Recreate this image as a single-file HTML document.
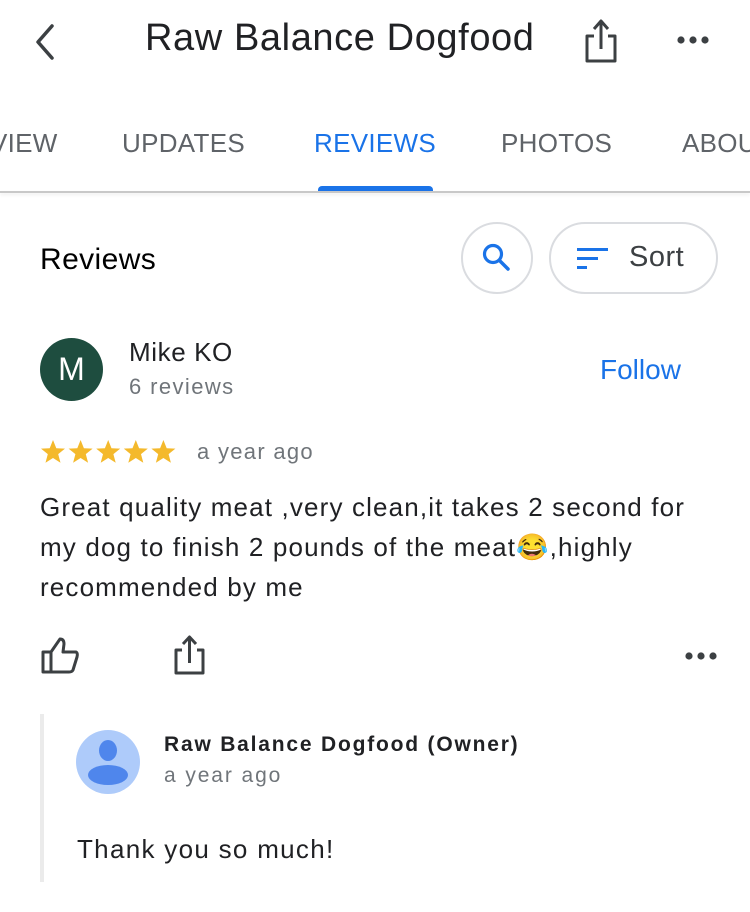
<!DOCTYPE html>
<html><head><meta charset="utf-8"><style>
*{margin:0;padding:0;box-sizing:border-box}
body{width:750px;height:912px;background:#fff;position:relative;overflow:hidden;font-family:"Liberation Sans",sans-serif;color:#202124}
.a{position:absolute;white-space:nowrap}
.tab{position:absolute;top:128px;font-size:26px;color:#5f6368;letter-spacing:0.3px}
</style></head><body>
<svg class="a" style="left:28px;top:22px" width="32" height="40" viewBox="0 0 32 40"><path d="M24 4 L10 20 L24 36" fill="none" stroke="#3c4043" stroke-width="3.5" stroke-linecap="round" stroke-linejoin="round"/></svg>
<div class="a" style="left:145px;top:17px;font-size:38px;letter-spacing:0.6px;color:#202124">Raw Balance Dogfood</div>
<svg class="a" style="left:582px;top:18px" width="38" height="46" viewBox="0 0 38 46"><path d="M12 18 H5 V43 H33 V18 H26" fill="none" stroke="#3c4043" stroke-width="3" stroke-linejoin="round"/><path d="M19 31 V4 M12 11 L19 3 L26 11" fill="none" stroke="#3c4043" stroke-width="3" stroke-linejoin="round"/></svg>
<svg class="a" style="left:676px;top:34px" width="36" height="12"><circle cx="5" cy="6" r="3.6" fill="#3c4043"/><circle cx="17" cy="6" r="3.6" fill="#3c4043"/><circle cx="29" cy="6" r="3.6" fill="#3c4043"/></svg>
<div class="tab" style="left:-10px">VIEW</div>
<div class="tab" style="left:122px">UPDATES</div>
<div class="tab" style="left:314px;color:#1a73e8">REVIEWS</div>
<div class="tab" style="left:501px">PHOTOS</div>
<div class="tab" style="left:682px">ABOUT</div>
<div class="a" style="left:318px;top:186px;width:115px;height:6px;background:#1a73e8;border-radius:4px 4px 0 0"></div>
<div class="a" style="left:0;top:191px;width:750px;height:2px;background:#c8c8c8;box-shadow:0 2px 3px rgba(0,0,0,0.08)"></div>
<div class="a" style="left:40px;top:243px;font-size:30px;letter-spacing:0.4px;color:#000">Reviews</div>
<div class="a" style="left:461px;top:222px;width:72px;height:72px;border:2px solid #dadce0;border-radius:50%"></div>
<svg class="a" style="left:480px;top:241px" width="34" height="34" viewBox="0 0 34 34"><circle cx="13" cy="13" r="8.5" fill="none" stroke="#1a73e8" stroke-width="3.2"/><path d="M19.5 19.5 L28 28" stroke="#1a73e8" stroke-width="3.5" stroke-linecap="round"/></svg>
<div class="a" style="left:549px;top:222px;width:169px;height:72px;border:2px solid #dadce0;border-radius:36px"></div>
<svg class="a" style="left:576px;top:246px" width="34" height="24"><rect x="1" y="2" width="31" height="3" fill="#1a73e8"/><rect x="1" y="11" width="21" height="3" fill="#1a73e8"/><rect x="1" y="20" width="10" height="3" fill="#1a73e8"/></svg>
<div class="a" style="left:629px;top:241px;font-size:29px;letter-spacing:0.5px;color:#3c4043">Sort</div>
<div class="a" style="left:40px;top:338px;width:63px;height:63px;border-radius:50%;background:#1e4d3f;color:#fff;font-size:32px;text-align:center;line-height:63px">M</div>
<div class="a" style="left:129px;top:337px;font-size:26px;letter-spacing:0.6px;color:#202124">Mike KO</div>
<div class="a" style="left:129px;top:374px;font-size:22px;color:#70757a;letter-spacing:1.4px">6 reviews</div>
<div class="a" style="left:600px;top:354px;font-size:28px;color:#1a73e8">Follow</div>
<svg class="a" style="left:40px;top:439px" width="140" height="26" viewBox="0 0 140 26">
<g fill="#f4b92c">
<path id="s" d="M13 1 L16.3 9.2 L25 9.6 L18.2 15.1 L20.5 23.8 L13 19 L5.5 23.8 L7.8 15.1 L1 9.6 L9.7 9.2 Z"/>
<use href="#s" x="27.6"/><use href="#s" x="55.2"/><use href="#s" x="82.8"/><use href="#s" x="110.4"/>
</g></svg>
<div class="a" style="left:197px;top:439px;font-size:22px;color:#70757a;letter-spacing:1.3px">a year ago</div>
<div class="a" style="left:40px;top:487px;font-size:26px;letter-spacing:1.15px;line-height:40px;color:#202124;white-space:nowrap">Great quality meat ,very clean,it takes 2 second for<br>my dog to finish 2 pounds of the meat😂,highly<br>recommended by me</div>
<svg class="a" style="left:40px;top:636px" width="42" height="40" viewBox="0 0 42 40"><path d="M3 16 H11 V36 H3 Z M11 16 L20 3 Q24 3 24 8 L23 16 H36 Q38 17 37 21 L33 34 Q32 36 29 36 H11" fill="none" stroke="#3c4043" stroke-width="3" stroke-linejoin="round"/></svg>
<svg class="a" style="left:170px;top:634px" width="38" height="42" viewBox="0 0 38 42"><path d="M12 16 H6 V39 H33 V16 H27" fill="none" stroke="#3c4043" stroke-width="3" stroke-linejoin="round"/><path d="M19.5 29 V4 M13 10 L19.5 3 L26 10" fill="none" stroke="#3c4043" stroke-width="3" stroke-linejoin="round"/></svg>
<svg class="a" style="left:684px;top:650px" width="36" height="12"><circle cx="5" cy="6" r="3.6" fill="#3c4043"/><circle cx="17" cy="6" r="3.6" fill="#3c4043"/><circle cx="29" cy="6" r="3.6" fill="#3c4043"/></svg>
<div class="a" style="left:40px;top:714px;width:4px;height:168px;background:#ebebeb"></div>
<div class="a" style="left:76px;top:730px;width:64px;height:64px;border-radius:50%;background:#aecbfa;overflow:hidden">
<div style="position:absolute;left:23px;top:10px;width:18px;height:21px;border-radius:50%;background:#4f86ec"></div>
<div style="position:absolute;left:12px;top:35px;width:40px;height:20px;border-radius:50%;background:#4f86ec"></div></div>
<div class="a" style="left:164px;top:733px;font-size:21px;font-weight:bold;color:#202124;letter-spacing:1.8px">Raw Balance Dogfood (Owner)</div>
<div class="a" style="left:164px;top:764px;font-size:21px;color:#70757a;letter-spacing:1.9px">a year ago</div>
<div class="a" style="left:77px;top:834px;font-size:26px;letter-spacing:1.3px;color:#202124">Thank you so much!</div>
</body></html>
